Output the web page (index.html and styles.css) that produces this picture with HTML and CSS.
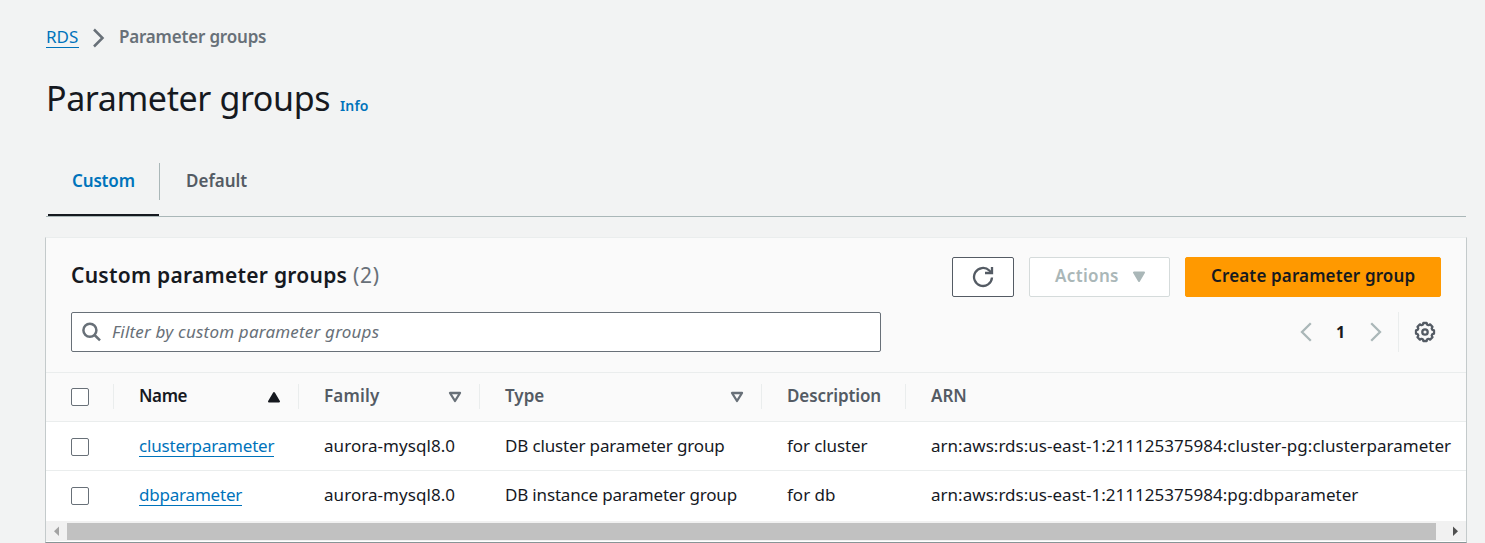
FILE: index.html
```html
<!DOCTYPE html>
<html lang="en">
<head>
<meta charset="utf-8">
<title>Parameter groups</title>
<link rel="stylesheet" href="styles.css">
</head>
<body>
<nav class="breadcrumb">
  <a class="link rds" href="#">RDS</a>
  <svg class="crumb-arrow" width="14" height="20" viewBox="0 0 14 20"><path d="M2 1.500 10.500 10 2 18.500" fill="none" stroke="#687078" stroke-width="2.500"/></svg>
  <span class="crumb-current"><span class="t-crumb">Parameter groups</span></span>
</nav>
<header class="title-row">
  <h1 class="title">Parameter groups</h1>
  <a class="info" href="#">Info</a>
</header>
<div class="tabs">
  <div class="tab active"><span class="t-custom">Custom</span></div>
  <div class="tab"><span class="t-default">Default</span></div>
</div>
<main class="panel">
  <section class="panel-head">
    <div class="head-row">
      <h2 class="panel-title"><span class="t-heading">Custom parameter groups</span><span class="count">(2)</span></h2>
      <button class="btn refresh" aria-label="Refresh"><svg width="22" height="22" viewBox="0 0 22 22" fill="none" stroke="#545b64" stroke-width="2.300"><path d="M20 11.500a9 9 0 1 1-2.700-7l2.500 2.500"/><path d="M20 1v6h-7"/></svg></button>
      <button class="btn actions"><span class="t-actions">Actions</span><svg width="14" height="12" viewBox="0 0 14 12"><path d="M2 1.500h10L7 10z" fill="#aab7b8" stroke="#aab7b8" stroke-width="2" stroke-linejoin="round"/></svg></button>
      <button class="btn create"><span class="t-create">Create parameter group</span></button>
    </div>
    <div class="filter-row">
      <div class="search">
        <svg width="20" height="20" viewBox="0 0 20 20" fill="none" stroke="#687078" stroke-width="2.500"><circle cx="8.900" cy="8.300" r="6.500"/><path d="m13.500 13 5.500 5.300"/></svg>
        <span class="t-filter">Filter by custom parameter groups</span>
      </div>
      <div class="pager">
        <svg width="12" height="20" viewBox="0 0 12 20"><path d="M10.800 1.200 2 10l8.800 8.800" fill="none" stroke="#aab7b8" stroke-width="2.300"/></svg>
        <span class="page">1</span>
        <svg width="12" height="20" viewBox="0 0 12 20"><path d="M1.200 1.200 10 10l-8.800 8.800" fill="none" stroke="#aab7b8" stroke-width="2.300"/></svg>
      </div>
      <div class="settings"><svg width="22" height="22" viewBox="0 0 22 22" fill="none" stroke="#545b64" stroke-width="2.300" stroke-linejoin="round"><path d="M9.400 2h3.200l.6 1.700 1.300.5 1.600-.8 2.400 2.400-.8 1.600.5 1.300 1.800.7v3.200l-1.800.7-.5 1.300.8 1.600-2.400 2.400-1.600-.8-1.300.5-.6 1.700H9.400l-.6-1.700-1.300-.5-1.600.8-2.400-2.400.8-1.600-.5-1.300L2 12.600V9.400l1.800-.7.5-1.300-.8-1.600 2.400-2.400 1.600.8 1.300-.5z"/><circle cx="11" cy="11" r="2.700"/></svg></div>
    </div>
  </section>
  <div class="table">
    <div class="row head">
      <div class="cell check"><i class="box"></i></div>
      <div class="cell sorted"><span class="t-name">Name</span><svg width="14" height="12" viewBox="0 0 14 12"><path d="M7 2 12 10.500H2z" fill="#16191f" stroke="#16191f" stroke-width="2" stroke-linejoin="round"/></svg></div>
      <div class="cell"><span class="t-family">Family</span><svg width="14" height="12" viewBox="0 0 14 12"><path d="M2 2h10L7 10z" fill="none" stroke="#687078" stroke-width="2.300" stroke-linejoin="round"/></svg></div>
      <div class="cell"><span class="t-type">Type</span><svg width="14" height="12" viewBox="0 0 14 12"><path d="M2 2h10L7 10z" fill="none" stroke="#687078" stroke-width="2.300" stroke-linejoin="round"/></svg></div>
      <div class="cell"><span class="t-desc">Description</span></div>
      <div class="cell"><span class="t-arn">ARN</span></div>
    </div>
    <div class="row">
      <div class="cell check"><i class="box"></i></div>
      <div class="cell"><a class="link t-cluster" href="#">clusterparameter</a></div>
      <div class="cell"><span class="t-aurora">aurora-mysql8.0</span></div>
      <div class="cell"><span class="t-dbc">DB cluster parameter group</span></div>
      <div class="cell"><span class="t-forc">for cluster</span></div>
      <div class="cell"><span class="t-arn1">arn:aws:rds:us-east-1:211125375984:cluster-pg:clusterparameter</span></div>
    </div>
    <div class="row last">
      <div class="cell check"><i class="box"></i></div>
      <div class="cell"><a class="link t-dbp" href="#">dbparameter</a></div>
      <div class="cell"><span class="t-aurora">aurora-mysql8.0</span></div>
      <div class="cell"><span class="t-dbi">DB instance parameter group</span></div>
      <div class="cell"><span class="t-ford">for db</span></div>
      <div class="cell"><span class="t-arn2">arn:aws:rds:us-east-1:211125375984:pg:dbparameter</span></div>
    </div>
  </div>
  <div class="scrollbar">
    <svg width="21" height="20" viewBox="0 0 21 20"><path d="M13 5.500v9.500L8 10.250z" fill="#a3a3a3"/></svg>
    <div class="thumb"></div>
    <svg width="30" height="20" viewBox="0 0 30 20"><path d="M17 5.500v9.500l5-4.750z" fill="#505050"/></svg>
  </div>
</main>
</body>
</html>
```
FILE: styles.css
```css
* { box-sizing: border-box; }
body {
  margin: 0;
  height: 543px;
  overflow: hidden;
  background: #f2f3f3;
  color: #16191f;
  font: 17px/24px "Noto Sans", "Open Sans", sans-serif;
  white-space: nowrap;
}
svg { display: block; flex: none; }
a { text-decoration: none; }
.breadcrumb { display: flex; align-items: flex-start; padding: 25px 0 0 46px; height: 60px; }
.link { height: 23px; color: #0073bb; border-bottom: 1px solid #0073bb; line-height: 24px; }
.rds { width: 33px; letter-spacing: 0; }
.crumb-arrow { margin: 3px 0 0 13px; }
.crumb-current { margin-left: 13px; color: #687078; font-weight: 600; }
.title-row { display: flex; align-items: baseline; height: 103px; padding: 13px 0 0 46px; }
.title { width: 294px; margin: 0; font-size: 34px; line-height: 50px; font-weight: 400; letter-spacing: -0.4px; }
.info { color: #0073bb; font-size: 14px; font-weight: 600; letter-spacing: 0.15px; }
.tabs { display: flex; height: 54px; margin: 0 19px 0 46px; border-bottom: 1px solid #aab7b8; }
.tab { padding: 6px 0 0 27px; color: #545b64; font-weight: 600; }
.tab.active { width: 111px; margin-left: 2px; padding-left: 24px; color: #0073bb; border-bottom: 2px solid #16191f; }
.tab.active + .tab { background: linear-gradient(#aab7b8, #aab7b8) left top / 1px 37px no-repeat; }
.panel { display: flex; flex-direction: column; width: 1422px; height: 306px; margin: 20px 0 0 45px; background: #fff; border: 1px solid #c4cacb; border-top-color: #eaeded; border-bottom-color: #879596; }
.panel-head { height: 135px; padding: 19px 25px 0; background: #fafafa; border-bottom: 1px solid #eaeded; }
.head-row { display: flex; height: 55px; }
.panel-title { display: flex; width: 881px; margin: 0; font-size: 21px; line-height: 36px; font-weight: 600; }
.t-heading { width: 282px; letter-spacing: 0.26px; }
.count { color: #687078; font-weight: 400; letter-spacing: 0.7px; }
.btn { display: flex; align-items: center; justify-content: center; height: 40px; padding: 0; border: 1px solid #545b64; border-radius: 2px; background: #fff; font: inherit; font-weight: 600; line-height: 24px; color: #16191f; }
.refresh { width: 62px; }
.actions { width: 141px; margin-left: 15px; padding-left: 25px; justify-content: flex-start; color: #aab7b8; border-color: #d5dbdb; }
.actions span { width: 77px; text-align: left; letter-spacing: 0.35px; }
.btn span { margin-top: -2px; }
.create { width: 256px; margin-left: 15px; border-color: #ff9900; background: #ff9900; padding-left: 25px; justify-content: flex-start; letter-spacing: 0.14px; }
.filter-row { display: flex; height: 40px; }
.search { display: flex; align-items: center; width: 810px; height: 40px; padding-left: 9px; background: #fff; border: 1px solid #687078; border-radius: 2px; color: #687078; font-style: italic; letter-spacing: 0.2px; }
.search span { margin-left: 11px; }
.pager { display: flex; align-items: center; width: 517px; padding-left: 419px; }
.page { width: 58px; padding-right: 1px; text-align: center; font-weight: 700; font-size: 16px; }
.settings { display: flex; align-items: center; width: 43px; padding-left: 15px; border-left: 1px solid #eaeded; }
.row { display: grid; grid-template-columns: 67px 185px 181px 282px 144px 1fr; height: 49px; border-bottom: 1px solid #eaeded; }
.row.last { height: 50px; border: 0; }
.cell { display: flex; align-items: flex-start; padding: 12px 0 0 26px; }
.check { padding: 16px 0 0 25px; }
.box { width: 18px; height: 18px; border: 1px solid #687078; border-radius: 2px; background: #fff; }
.head { background: #fafafa; color: #545b64; font-weight: 600; }
.head .cell { padding-top: 11px; }
.head .check { padding-top: 15px; }
.head .cell:not(.check) { background: linear-gradient(#eaeded, #eaeded) left 11px / 1px 25px no-repeat; }
.sorted { color: #16191f; }
.head .cell svg { margin: 7px 17px 0 auto; }
.t-crumb { letter-spacing: -0.19px; }
.t-custom { letter-spacing: -0.15px; }
.t-name { letter-spacing: -0.4px; }
.t-family { letter-spacing: 0.2px; }
.t-desc { letter-spacing: -0.1px; }
.t-cluster { letter-spacing: -0.19px; }
.t-dbp { letter-spacing: -0.2px; }
.t-dbc { letter-spacing: -0.15px; }
.t-dbi { letter-spacing: -0.17px; }
.t-forc { letter-spacing: -0.1px; }
.t-aurora { letter-spacing: 0.06px; }
.t-arn1, .t-arn2 { letter-spacing: 0.02px; }
.scrollbar { display: flex; height: 20px; background: #f1f1f1; }
.thumb { flex: 1; height: 17px; margin-top: 2px; background: #c1c1c1; }
```
